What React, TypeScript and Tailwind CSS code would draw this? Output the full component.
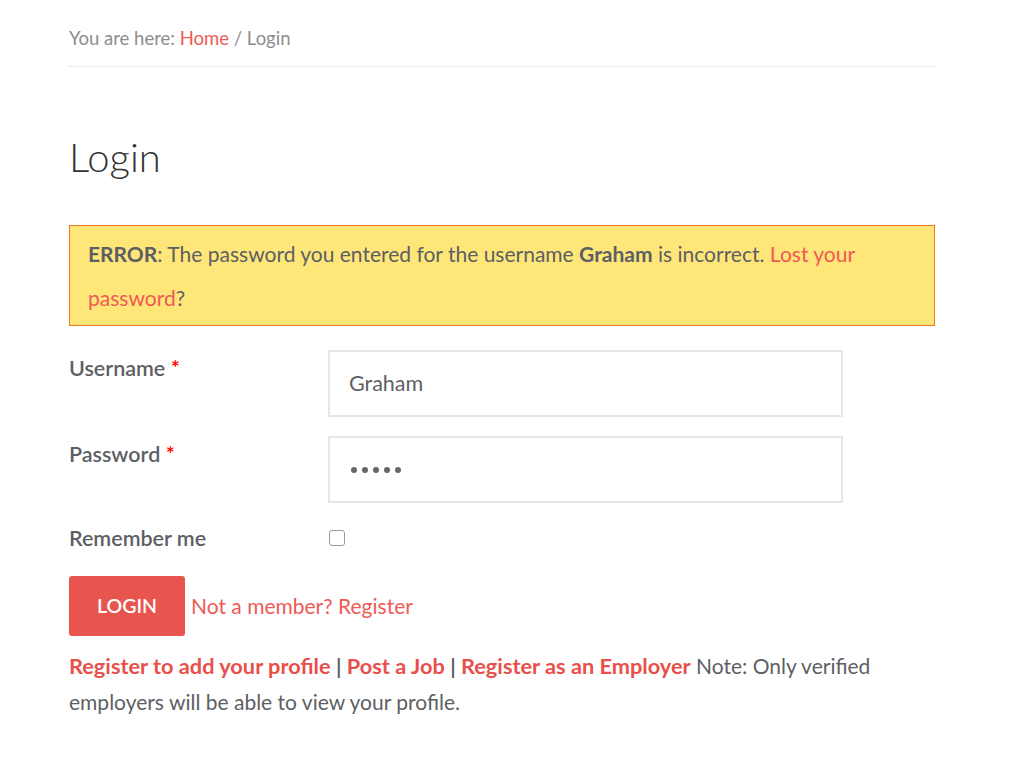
export default function App() {
  return (
    <div className="min-h-[759px] w-[1024px] bg-white font-['Lato',sans-serif] text-[#5c5f64]">
      <div className="ml-[69px] w-[866px] pt-[24px]">
        <div className="border-b border-dotted border-[#d8d8d8] pb-[14px] text-[18.5px] leading-[28px] text-[#8d8d8d]">
          You are here: <a className="text-[#ee5a55]">Home</a> / Login
        </div>

        <h1 className="mt-[66px] text-[40px] font-light leading-[48px] text-[#333]">Login</h1>

        <div className="mt-[44px] border border-[#ec7a1c] bg-[#fee679] px-[18px] pt-[6px] pb-[5px] text-[21px] leading-[44px]">
          <strong className="font-bold">ERROR</strong>: The password you entered for the username{' '}
          <strong className="font-bold">Graham</strong> is incorrect.{' '}
          <a className="text-[#ee5a55]">Lost your password</a>?
        </div>

        <form className="mt-[24px]">
          <div className="flex">
            <label className="w-[259px] pt-[3px] text-[21.5px] font-semibold leading-[30px]">
              Username <span className="text-[#f00]">*</span>
            </label>
            <div className="flex h-[67px] w-[515px] items-center border-2 border-[#e6e6e6] px-[19px] text-[21.5px]">
              Graham
            </div>
          </div>
          <div className="mt-[19px] flex">
            <label className="w-[259px] pt-[3px] text-[21.5px] font-semibold leading-[30px]">
              Password <span className="text-[#f00]">*</span>
            </label>
            <div className="flex h-[67px] w-[515px] items-center gap-[5px] border-2 border-[#e6e6e6] px-[21px]">
              {[0, 1, 2, 3, 4].map(i => (
                <span key={i} className="h-[6px] w-[6px] rounded-full bg-[#666]" />
              ))}
            </div>
          </div>
          <div className="mt-[20px] flex items-center">
            <label className="w-[260px] text-[21.5px] font-semibold leading-[30px]">Remember me</label>
            <span className="h-[16px] w-[16px] rounded-[3px] border border-[#9a9a9a] bg-white" />
          </div>
          <div className="mt-[23px] flex items-center gap-[6px]">
            <button type="button" className="h-[60px] w-[116px] rounded-[3px] bg-[#e8554f] text-[19.5px] font-semibold text-white">
              LOGIN
            </button>
            <a className="text-[21px] text-[#ee5a55]">Not a member? Register</a>
          </div>
        </form>

        <p className="mt-[12px] text-[21px] leading-[36px]">
          <a className="text-[21.75px] font-bold text-[#e8504b]">Register to add your profile</a> <b>|</b>{' '}
          <a className="text-[21.75px] font-bold text-[#e8504b]">Post a Job</a> <b>|</b>{' '}
          <a className="text-[21.75px] font-bold text-[#e8504b]">Register as an Employer</a> Note: Only verified employers will be able to view your profile.
        </p>
      </div>
    </div>
  )
}
